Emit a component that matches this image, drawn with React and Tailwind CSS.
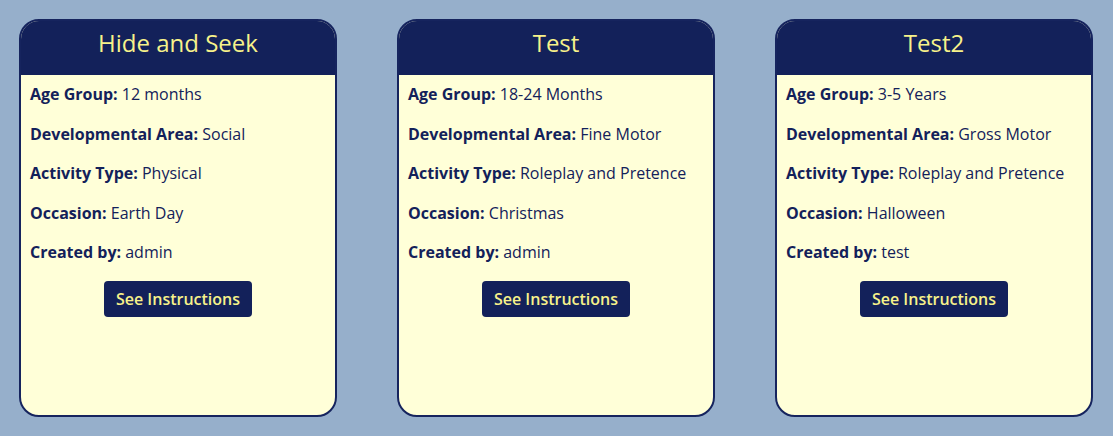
import React from 'react';

const activities = [
  {
    title: 'Hide and Seek',
    ageGroup: '12 months',
    area: 'Social',
    type: 'Physical',
    occasion: 'Earth Day',
    createdBy: 'admin',
  },
  {
    title: 'Test',
    ageGroup: '18-24 Months',
    area: 'Fine Motor',
    type: 'Roleplay and Pretence',
    occasion: 'Christmas',
    createdBy: 'admin',
  },
  {
    title: 'Test2',
    ageGroup: '3-5 Years',
    area: 'Gross Motor',
    type: 'Roleplay and Pretence',
    occasion: 'Halloween',
    createdBy: 'test',
  },
];

const Field = ({ label, value }) => (
  <p className="h-[39.5px] leading-[22px]">
    <span className="font-bold">{label}:</span> {value}
  </p>
);

const ActivityCard = ({ activity }) => (
  <div className="w-[318px] h-[398px] flex flex-col bg-[#ffffd8] border-2 border-[#16245e] rounded-[20px] overflow-hidden">
    <div className="h-[54px] bg-[#13215a] flex justify-center pt-[6px]">
      <h2 className="text-[24px] leading-[32px] text-[#f7f28a]">{activity.title}</h2>
    </div>
    <div className="px-[9px] pt-[8px] text-[16px] text-[#13215a]">
      <Field label="Age Group" value={activity.ageGroup} />
      <Field label="Developmental Area" value={activity.area} />
      <Field label="Activity Type" value={activity.type} />
      <Field label="Occasion" value={activity.occasion} />
      <Field label="Created by" value={activity.createdBy} />
      <div className="flex justify-center">
        <button className="w-[148px] h-[36px] bg-[#13215a] text-[#f7f28a] rounded-[4px] font-semibold">
          See Instructions
        </button>
      </div>
    </div>
  </div>
);

const App = () => {
  return (
    <div
      className="w-[1113px] h-[436px] bg-[#96afcb] flex gap-[60px] pl-[19px] pt-[19px]"
      style={{ fontFamily: '"Open Sans", sans-serif' }}
    >
      {activities.map((a) => (
        <ActivityCard key={a.title} activity={a} />
      ))}
    </div>
  );
};

export default App;
